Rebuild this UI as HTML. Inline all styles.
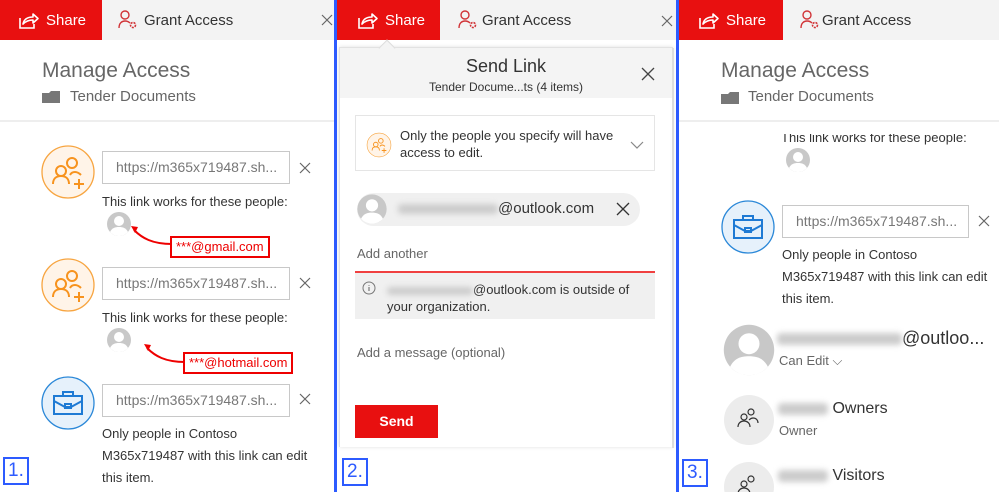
<!DOCTYPE html>
<html><head><meta charset="utf-8"><style>
*{margin:0;padding:0;box-sizing:border-box}
body{width:999px;height:492px;overflow:hidden;background:#fff;font-family:"Liberation Sans",sans-serif;position:relative;color:#333}
.a{position:absolute;white-space:nowrap}
.tabbar{position:absolute;top:0;height:40px;background:#f3f3f3}
.share{position:absolute;top:0;height:40px;background:#e81010;color:#fff;font-size:15px;line-height:40px}
.gt{font-size:15px;color:#333;line-height:40px}
.inp{position:absolute;border:1px solid #c8c8c8;height:33px;font-size:14px;color:#777;line-height:31px;padding-left:13px;background:#fff}
.sm{font-size:13px;color:#333}
.blur{display:inline-block;background:#ccc;filter:blur(3px);height:10px;border-radius:4px;vertical-align:middle}
.lbl{position:absolute;border:2px solid #2d5bff;color:#2d5bff;font-size:19px;line-height:24px;padding:0 3px;background:#fff}
.red{position:absolute;border:2px solid #e00;color:#e00;font-size:13px;line-height:18px;padding:0 4px;background:#fff}
</style></head><body>
<svg width="0" height="0" style="position:absolute"><defs>
<g id="shr"><path d="M2 8v10h14v-4" fill="none" stroke="#fff" stroke-width="1.6"/><path d="M5 14c1-5 5-7 10-7V4l5 4.5-5 4.5V10c-4 0-7 1-10 4z" fill="none" stroke="#fff" stroke-width="1.6" stroke-linejoin="round"/></g>
<g id="gr"><circle cx="7" cy="6" r="4" fill="none" stroke="#d13438" stroke-width="1.4"/><path d="M1 19c0-5 3-7 6-7s4 1 5 2" fill="none" stroke="#d13438" stroke-width="1.4"/><circle cx="15" cy="16" r="2.5" fill="none" stroke="#d13438" stroke-width="1.6" stroke-dasharray="2 1"/></g>
<g id="ppl"><circle cx="0" cy="0" r="26" fill="#fff4e8" stroke="#f7a541" stroke-width="1.3"/><g fill="none" stroke="#f7931e" stroke-width="2"><circle cx="4" cy="-9" r="5"/><circle cx="-7" cy="-1" r="5"/><path d="M-15 12c0-5 3-8 8-8s8 3 8 8"/><path d="M2 3c1-2 3-3 5-3s4 1 6 3"/><path d="M6 12h10M11 7v10"/></g></g>
<g id="brief"><circle cx="0" cy="0" r="26" fill="#e6f1fb" stroke="#2b88d8" stroke-width="1.3"/><g fill="none" stroke="#1e7ad4" stroke-width="2"><rect x="-14" y="-7" width="28" height="18"/><path d="M-5-7v-4h10v4M-14-2l11 6h6l11-6"/><rect x="-3" y="1" width="6" height="4"/></g></g>
<g id="av"><circle cx="0" cy="0" r="12" fill="#c8c8c8"/><circle cx="0" cy="-3" r="5" fill="#fff"/><path d="M-9 8c2-4 5-5 9-5s7 1 9 5a12 12 0 0 1-18 0z" fill="#fff"/></g>
<g id="x"><path d="M-5-5L5 5M5-5L-5 5" stroke="#666" stroke-width="1.2"/></g>
</defs></svg>

<!-- PANEL 1 -->
<div class="tabbar" style="left:0;width:334px"></div>
<div class="share" style="left:0;width:102px"><svg class="a" style="left:18px;top:10px" width="22" height="20"><use href="#shr"/></svg><span class="a" style="left:46px;top:1px">Share</span></div>
<svg class="a" style="left:118px;top:9px" width="20" height="22"><use href="#gr"/></svg>
<div class="a gt" style="left:144px;top:1px">Grant Access</div>
<svg class="a" style="left:318px;top:12px" width="16" height="16"><g transform="translate(9,8)"><use href="#x"/></g></svg>
<div class="a" style="left:42px;top:59px;font-size:21px;color:#666">Manage Access</div>
<svg class="a" style="left:42px;top:91px" width="18" height="12"><path d="M0 2h7l2-2h9v12H0z" fill="#777"/></svg>
<div class="a" style="left:70px;top:88px;font-size:15px;color:#666">Tender Documents</div>
<div class="a" style="left:0;top:120px;width:334px;height:2px;background:#eee"></div>

<svg class="a" style="left:0;top:140px" width="334" height="300">
<g transform="translate(68,32)"><use href="#ppl"/></g>
<g transform="translate(305,28)"><use href="#x"/></g>
<g transform="translate(119,84)"><use href="#av"/></g>
<path d="M172 104c-20 0-30-6-38-14" fill="none" stroke="#e00" stroke-width="2"/><path d="M131 86l7 1-3 6z" fill="#e00"/>
<g transform="translate(68,145)"><use href="#ppl"/></g>
<g transform="translate(305,143)"><use href="#x"/></g>
<g transform="translate(119,200)"><use href="#av"/></g>
<path d="M185 222c-20 0-30-6-38-14" fill="none" stroke="#e00" stroke-width="2"/><path d="M144 204l7 1-3 6z" fill="#e00"/>
<g transform="translate(68,263)"><use href="#brief"/></g>
<g transform="translate(305,259)"><use href="#x"/></g>
</svg>
<div class="inp" style="left:102px;top:151px;width:188px">https://m365x719487.sh...</div>
<div class="a sm" style="left:102px;top:194px">This link works for these people:</div>
<div class="red" style="left:170px;top:236px">***@gmail.com</div>
<div class="inp" style="left:102px;top:267px;width:188px">https://m365x719487.sh...</div>
<div class="a sm" style="left:102px;top:310px">This link works for these people:</div>
<div class="red" style="left:183px;top:352px">***@hotmail.com</div>
<div class="inp" style="left:102px;top:384px;width:188px">https://m365x719487.sh...</div>
<div class="a sm" style="left:102px;top:423px;line-height:22px">Only people in Contoso<br>M365x719487 with this link can edit<br>this item.</div>
<div class="lbl" style="left:3px;top:457px">1.</div>

<div class="a" style="left:334px;top:0;width:3px;height:492px;background:#2d5bff"></div>
<div class="a" style="left:676px;top:0;width:3px;height:492px;background:#2d5bff"></div>

<!-- PANEL 2 -->
<div class="tabbar" style="left:337px;width:339px"></div>
<div class="share" style="left:337px;width:103px"><svg class="a" style="left:20px;top:10px" width="22" height="20"><use href="#shr"/></svg><span class="a" style="left:48px;top:1px">Share</span></div>
<svg class="a" style="left:458px;top:9px" width="20" height="22"><use href="#gr"/></svg>
<div class="a gt" style="left:482px;top:1px">Grant Access</div>
<svg class="a" style="left:658px;top:12px" width="18" height="18"><g transform="translate(9,9)"><use href="#x"/></g></svg>
<div class="a" style="left:339px;top:47px;width:334px;height:400px;background:#fff;border:1px solid #e2e2e2;border-bottom:none;box-shadow:0 0 4px rgba(0,0,0,.12)"></div>
<div class="a" style="left:340px;top:48px;width:332px;height:50px;background:#f4f4f4"></div>
<div class="a" style="left:381px;top:42px;width:12px;height:12px;background:#f4f4f4;border-left:1px solid #ddd;border-top:1px solid #ddd;transform:rotate(45deg)"></div>
<div class="a" style="left:672px;top:48px;width:2px;height:400px;background:#ddd"></div>
<div class="a" style="left:340px;top:56px;width:332px;text-align:center;font-size:18px;color:#333">Send Link</div>
<div class="a" style="left:340px;top:80px;width:332px;text-align:center;font-size:12px;color:#333">Tender Docume...ts (4 items)</div>
<svg class="a" style="left:638px;top:64px" width="20" height="20"><g transform="translate(10,10)"><path d="M-6-6L6 6M6-6L-6 6" stroke="#444" stroke-width="1.3"/></g></svg>
<div class="a" style="left:355px;top:115px;width:300px;height:56px;border:1px solid #e5e5e5"></div>
<svg class="a" style="left:366px;top:132px" width="26" height="26"><g transform="translate(13,13) scale(.46)"><use href="#ppl"/></g></svg>
<div class="a sm" style="left:400px;top:127px;line-height:17px">Only the people you specify will have<br>access to edit.</div>
<svg class="a" style="left:630px;top:140px" width="14" height="10"><path d="M1 2l6 6 6-6" fill="none" stroke="#888" stroke-width="1.2"/></svg>
<div class="a" style="left:357px;top:193px;width:283px;height:33px;background:#f0f0f0;border-radius:17px"></div>
<svg class="a" style="left:357px;top:194px" width="30" height="30"><g transform="translate(15,15) scale(1.22)"><use href="#av"/></g></svg>
<div class="a" style="left:398px;top:200px;font-size:15px;color:#333"><span class="blur" style="width:100px"></span>@outlook.com</div>
<svg class="a" style="left:614px;top:200px" width="18" height="18"><g transform="translate(9,9)"><path d="M-6-6L6 6M6-6L-6 6" stroke="#333" stroke-width="1.3"/></g></svg>
<div class="a sm" style="left:357px;top:246px;color:#666">Add another</div>
<div class="a" style="left:355px;top:273px;width:300px;height:46px;background:#f0f0f0"></div>
<div class="a" style="left:355px;top:271px;width:300px;height:2px;background:#f04040"></div>
<svg class="a" style="left:362px;top:281px" width="14" height="14"><circle cx="7" cy="7" r="6" fill="none" stroke="#777"/><path d="M7 6v4M7 4v.8" stroke="#777" stroke-width="1.2"/></svg>
<div class="a sm" style="left:387px;top:281px;line-height:17px"><span class="blur" style="width:86px;height:8px"></span>@outlook.com is outside of<br>your organization.</div>
<div class="a sm" style="left:357px;top:345px;color:#666">Add a message (optional)</div>
<div class="a" style="left:355px;top:405px;width:83px;height:33px;background:#e81010;color:#fff;font-weight:bold;font-size:14px;text-align:center;line-height:33px">Send</div>
<div class="lbl" style="left:342px;top:458px">2.</div>

<!-- PANEL 3 -->
<div class="tabbar" style="left:679px;width:320px"></div>
<div class="share" style="left:679px;width:104px"><svg class="a" style="left:19px;top:10px" width="22" height="20"><use href="#shr"/></svg><span class="a" style="left:47px;top:1px">Share</span></div>
<svg class="a" style="left:800px;top:9px" width="20" height="22"><use href="#gr"/></svg>
<div class="a gt" style="left:822px;top:1px">Grant Access</div>
<div class="a" style="left:721px;top:59px;font-size:21px;color:#666">Manage Access</div>
<svg class="a" style="left:721px;top:92px" width="18" height="12"><path d="M0 2h7l2-2h9v12H0z" fill="#777"/></svg>
<div class="a" style="left:748px;top:88px;font-size:15px;color:#666">Tender Documents</div>
<div class="a sm" style="left:781px;top:130px">This link works for these people:</div>
<div class="a" style="left:679px;top:120px;width:320px;height:14px;background:#fff"></div>
<div class="a" style="left:679px;top:120px;width:320px;height:2px;background:#eee"></div>
<svg class="a" style="left:679px;top:140px" width="320" height="352">
<g transform="translate(119,20)"><use href="#av"/></g>
<g transform="translate(69,87)"><use href="#brief"/></g>
<g transform="translate(305,81)"><use href="#x"/></g>
<g transform="translate(70,210) scale(2.1)"><use href="#av"/></g>
<circle cx="70" cy="280" r="25" fill="#ececec"/>
<g fill="none" stroke="#333" stroke-width="1.2"><circle cx="72" cy="272" r="3"/><circle cx="65" cy="277" r="3"/><path d="M59 287c0-4 3-6 6-6s6 2 6 6M70 280c1-1 2-2 4-2 3 0 5 2 5 5"/></g>
<circle cx="70" cy="347" r="25" fill="#ececec"/>
<g fill="none" stroke="#333" stroke-width="1.2"><circle cx="72" cy="339" r="3"/><circle cx="65" cy="344" r="3"/><path d="M59 354c0-4 3-6 6-6s6 2 6 6"/></g>
</svg>
<div class="inp" style="left:782px;top:205px;width:187px">https://m365x719487.sh...</div>
<div class="a sm" style="left:782px;top:244px;line-height:22px">Only people in Contoso<br>M365x719487 with this link can edit<br>this item.</div>
<div class="a" style="left:777px;top:328px;font-size:18px;color:#333"><span class="blur" style="width:125px;height:12px"></span>@outloo...</div>
<div class="a sm" style="left:779px;top:353px;color:#666">Can Edit ⌵</div>
<div class="a" style="left:778px;top:400px;font-size:16px;color:#333"><span class="blur" style="width:50px;height:12px"></span> Owners</div>
<div class="a sm" style="left:779px;top:423px;color:#666">Owner</div>
<div class="a" style="left:778px;top:467px;font-size:16px;color:#333"><span class="blur" style="width:50px;height:12px"></span> Visitors</div>
<div class="lbl" style="left:682px;top:459px">3.</div>
</body></html>
